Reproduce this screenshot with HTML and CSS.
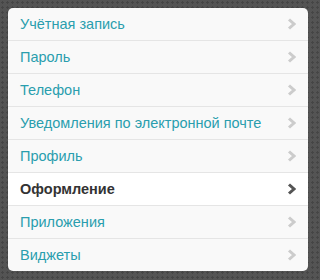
FILE: index.html
```html
<!DOCTYPE html>
<html lang="ru">
<head>
<meta charset="utf-8">
<link rel="stylesheet" href="styles.css">
</head>
<body>
<ul class="menu">
  <li class="item"><span>Учётная запись</span><svg class="chev" viewBox="0 0 9 12"><polyline points="2,1.5 7,6 2,10.5"/></svg></li>
  <li class="item"><span>Пароль</span><svg class="chev" viewBox="0 0 9 12"><polyline points="2,1.5 7,6 2,10.5"/></svg></li>
  <li class="item"><span>Телефон</span><svg class="chev" viewBox="0 0 9 12"><polyline points="2,1.5 7,6 2,10.5"/></svg></li>
  <li class="item"><span>Уведомления по электронной почте</span><svg class="chev" viewBox="0 0 9 12"><polyline points="2,1.5 7,6 2,10.5"/></svg></li>
  <li class="item"><span>Профиль</span><svg class="chev" viewBox="0 0 9 12"><polyline points="2,1.5 7,6 2,10.5"/></svg></li>
  <li class="item active"><span>Оформление</span><svg class="chev" viewBox="0 0 9 12"><polyline points="2,1.5 7,6 2,10.5"/></svg></li>
  <li class="item"><span>Приложения</span><svg class="chev" viewBox="0 0 9 12"><polyline points="2,1.5 7,6 2,10.5"/></svg></li>
  <li class="item"><span>Виджеты</span><svg class="chev" viewBox="0 0 9 12"><polyline points="2,1.5 7,6 2,10.5"/></svg></li>
</ul>
</body>
</html>
```
FILE: styles.css
```css
html, body {
  height: 100%;
}
body {
  margin: 0;
  padding: 8px;
  box-sizing: border-box;
  background-color: #545454;
  background-image: radial-gradient(circle, #454545 35%, transparent 40%);
  background-size: 5px 5px;
  font-family: "Liberation Sans", Arial, sans-serif;
}
.menu {
  list-style: none;
  margin: 0;
  padding: 0;
  width: 300px;
  background: #f9f9f9;
  border-radius: 5px;
  overflow: hidden;
}
.item {
  display: flex;
  align-items: center;
  justify-content: space-between;
  height: 32px;
  padding: 0 12px;
  border-bottom: 1px solid #e5e5e5;
  font-size: 14.5px;
  color: #2a9eae;
}
.item:last-child {
  border-bottom: none;
}
.item.active {
  background: #fff;
  color: #333;
  font-weight: bold;
}
.chev {
  width: 9px;
  height: 12px;
  fill: none;
  stroke: #ccc;
  stroke-width: 3;
}
.active .chev {
  stroke: #555;
}
```
